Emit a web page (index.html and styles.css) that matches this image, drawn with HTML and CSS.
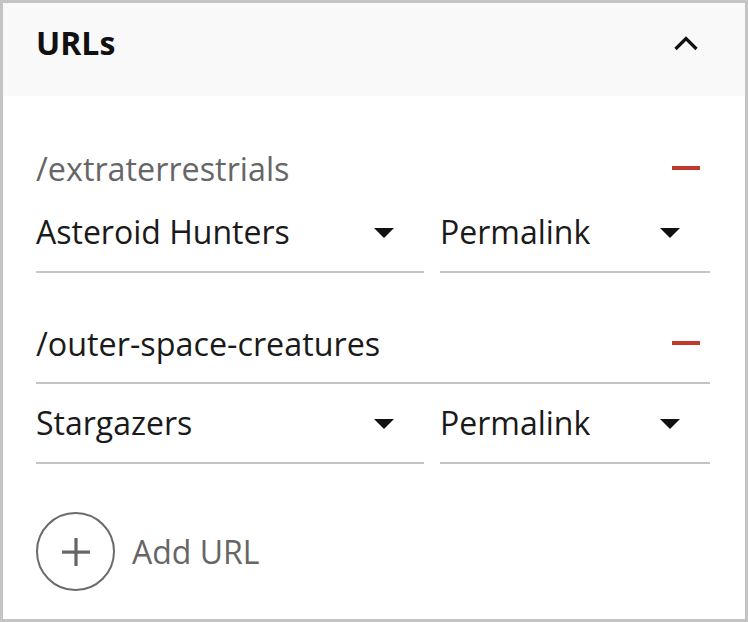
FILE: index.html
```html
<!DOCTYPE html>
<html>
<head>
<meta charset="utf-8">
<link rel="stylesheet" href="styles.css">
</head>
<body>
<div class="panel">
  <div class="panel-header">
    <div class="panel-title">URLs</div>
    <svg class="chevron" width="24" height="15" viewBox="0 0 24 15"><polyline points="1.5,13 12,2.5 22.5,13" fill="none" stroke="#111" stroke-width="3.2"/></svg>
  </div>
  <div class="panel-body">
    <div class="group group-first">
      <div class="path-row">
        <span class="path-text muted">/extraterrestrials</span>
        <span class="remove"></span>
      </div>
      <div class="select-row">
        <div class="select select-wide">
          <span class="select-text">Asteroid Hunters</span>
          <svg class="caret" width="20" height="10" viewBox="0 0 20 10"><polygon points="0,0 20,0 10,10" fill="#111"/></svg>
        </div>
        <div class="select select-narrow">
          <span class="select-text">Permalink</span>
          <svg class="caret" width="20" height="10" viewBox="0 0 20 10"><polygon points="0,0 20,0 10,10" fill="#111"/></svg>
        </div>
      </div>
    </div>
    <div class="group group-second">
      <div class="path-row underlined">
        <span class="path-text">/outer-space-creatures</span>
        <span class="remove"></span>
      </div>
      <div class="select-row second">
        <div class="select select-wide">
          <span class="select-text">Stargazers</span>
          <svg class="caret" width="20" height="10" viewBox="0 0 20 10"><polygon points="0,0 20,0 10,10" fill="#111"/></svg>
        </div>
        <div class="select select-narrow">
          <span class="select-text">Permalink</span>
          <svg class="caret" width="20" height="10" viewBox="0 0 20 10"><polygon points="0,0 20,0 10,10" fill="#111"/></svg>
        </div>
      </div>
    </div>
    <div class="add-row">
      <div class="add-circle">
        <svg width="28" height="28" viewBox="0 0 28 28"><rect x="0" y="12.5" width="28" height="3.2" fill="#666"/><rect x="12.4" y="0" width="3.2" height="28" fill="#666"/></svg>
      </div>
      <span class="add-text">Add URL</span>
    </div>
  </div>
</div>
</body>
</html>
```
FILE: styles.css
```css
html, body {
  margin: 0;
  padding: 0;
  background: #ffffff;
}
body {
  font-family: "Open Sans", "Noto Sans", sans-serif;
}
.panel {
  width: 748px;
  height: 622px;
  box-sizing: border-box;
  border: 3px solid #c4c4c4;
  background: #ffffff;
  display: flex;
  flex-direction: column;
}
.panel-header {
  height: 93px;
  box-sizing: border-box;
  background: #f9f9f9;
  padding: 19px 47px 0 33px;
  display: flex;
  justify-content: space-between;
  align-items: flex-start;
}
.panel-title {
  font-size: 32px;
  font-weight: 700;
  line-height: 41px;
  color: #111111;
}
.chevron {
  margin-top: 14px;
  display: block;
}
.panel-body {
  padding: 0 35px 0 33px;
  display: flex;
  flex-direction: column;
}
.group-first {
  margin-top: 50px;
}
.group-second {
  margin-top: 48px;
}
.path-row {
  display: flex;
  align-items: center;
  justify-content: space-between;
  height: 44px;
  font-size: 32.3px;
  line-height: 44px;
  color: #1a1a1a;
}
.path-row.underlined {
  height: auto;
  padding-bottom: 17px;
  border-bottom: 2px solid #c4c4c4;
}
.path-text {
  white-space: nowrap;
}
.muted {
  color: #666666;
}
.remove {
  width: 28px;
  height: 4px;
  background: #c0392b;
  margin-right: 10px;
}
.select-row {
  display: flex;
  gap: 16px;
  margin-top: 20px;
}
.select-row.second {
  margin-top: 17px;
}
.select {
  display: flex;
  align-items: center;
  justify-content: space-between;
  font-size: 32px;
  line-height: 44px;
  color: #1a1a1a;
  padding-bottom: 17px;
  border-bottom: 2px solid #c4c4c4;
  padding-right: 30px;
  box-sizing: border-box;
}
.select-wide {
  width: 388px;
}
.select-narrow {
  width: 270px;
}
.caret {
  display: block;
  margin-top: 2px;
}
.add-row {
  display: flex;
  align-items: center;
  margin-top: 48px;
  gap: 17px;
}
.add-circle {
  width: 79px;
  height: 79px;
  box-sizing: border-box;
  border: 2px solid #6b6b6b;
  border-radius: 50%;
  display: flex;
  align-items: center;
  justify-content: center;
}
.add-circle svg {
  display: block;
}
.add-text {
  font-size: 32px;
  line-height: 44px;
  color: #666666;
}
```
